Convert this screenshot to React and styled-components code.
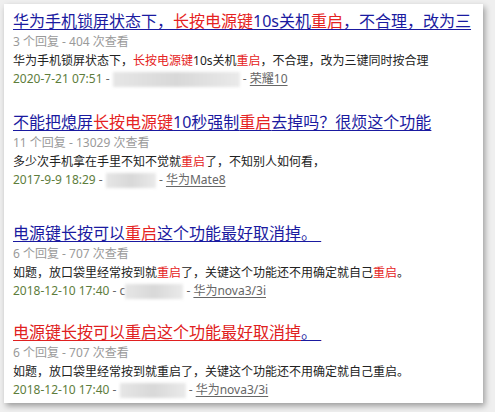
import React from "react";
import styled, { createGlobalStyle } from "styled-components";

const Global = createGlobalStyle`
  html, body { margin: 0; padding: 0; background: #efefef; }
  body { font-family: "Noto Sans", "Noto Sans CJK SC", sans-serif; }
`;

const Page = styled.div`
  width: 495px;
  height: 412px;
  padding: 4px 12px 9px 4px;
  box-sizing: border-box;
  background: #efefef;
`;

const Card = styled.div`
  background: #fff;
  height: 100%;
  box-sizing: border-box;
  padding: 6px 9px 6px 9px;
  box-shadow: 2px 3px 6px rgba(0, 0, 0, 0.35);
  overflow: hidden;
`;

const Item = styled.div`
  margin-top: ${(p) => p.$gap || 0}px;
`;

const Title = styled.a`
  display: block;
  font-size: 16px;
  line-height: 22px;
  color: ${(p) => (p.$visited ? "#e02020" : "#1a1aa0")};
  text-decoration: underline;
  text-decoration-thickness: 1px;
  text-underline-offset: 2px;
  white-space: nowrap;
`;

const Hl = styled.span`
  color: #e52222;
`;

const Tail = styled.span`
  color: #1a1aa0;
  text-decoration: underline;
  text-decoration-color: #1a1aa0;
  text-decoration-thickness: 1px;
  text-underline-offset: 2px;
`;

const Meta = styled.div`
  font-size: 12px;
  line-height: 20px;
  color: #9a9a9a;
`;

const Snippet = styled.div`
  font-size: 12px;
  line-height: 18px;
  color: #222;
  white-space: nowrap;
`;

const DateLine = styled.div`
  display: flex;
  align-items: center;
  font-size: 12px;
  line-height: 18px;
  color: #5e7d3c;
  white-space: pre;
`;

const Blur = styled.span`
  display: inline-block;
  width: ${(p) => p.$w}px;
  height: 15px;
  background: linear-gradient(90deg, #e6e6e6, #d8d8d8 50%, #eaeaea);
  filter: blur(1.5px);
`;

const User = styled.a`
  color: #666;
  text-decoration: underline;
  text-underline-offset: 2px;
`;

const Sep = styled.span`
  color: #666;
`;

const items = [
  {
    gap: 0,
    title: [
      ["华为手机锁屏状态下，", 0],
      ["长按电源键", 1],
      ["10s关机", 0],
      ["重启", 1],
      ["，不合理，改为三", 0],
    ],
    meta: "3 个回复 - 404 次查看",
    snippet: [
      ["华为手机锁屏状态下，", 0],
      ["长按电源键", 1],
      ["10s关机", 0],
      ["重启", 1],
      ["，不合理，改为三键同时按合理", 0],
    ],
    date: "2020-7-21 07:51",
    blur: 127,
    user: "荣耀10",
  },
  {
    gap: 23,
    title: [
      ["不能把熄屏", 0],
      ["长按电源键", 1],
      ["10秒强制", 0],
      ["重启", 1],
      ["去掉吗？很烦这个功能", 0],
    ],
    meta: "11 个回复 - 13029 次查看",
    snippet: [
      ["多少次手机拿在手里不知不觉就", 0],
      ["重启", 1],
      ["了，不知别人如何看，", 0],
    ],
    date: "2017-9-9 18:29",
    blur: 50,
    user: "华为Mate8",
  },
  {
    gap: 33,
    title: [
      ["电源键长按可以", 0],
      ["重启", 1],
      ["这个功能最好取消掉。\u00a0", 0],
    ],
    meta: "6 个回复 - 707 次查看",
    snippet: [
      ["如题，放口袋里经常按到就", 0],
      ["重启", 1],
      ["了，关键这个功能还不用确定就自己", 0],
      ["重启", 1],
      ["。", 0],
    ],
    date: "2018-12-10 17:40",
    blur: 58,
    prefix: "c",
    user: "华为nova3/3i",
  },
  {
    gap: 21,
    visited: true,
    title: [["电源键长按可以重启这个功能最好取消掉", 0]],
    tail: "。\u00a0",
    meta: "6 个回复 - 707 次查看",
    snippet: [["如题，放口袋里经常按到就重启了，关键这个功能还不用确定就自己重启。", 0]],
    date: "2018-12-10 17:40",
    blur: 66,
    user: "华为nova3/3i",
  },
];

const Parts = ({ parts }) =>
  parts.map(([t, h], i) => (h ? <Hl key={i}>{t}</Hl> : <span key={i}>{t}</span>));

export default function App() {
  return (
    <>
      <Global />
      <Page>
        <Card>
          {items.map((it, i) => (
            <Item key={i} $gap={it.gap}>
              <Title href="#" $visited={it.visited}>
                <Parts parts={it.title} />
                {it.tail && <Tail>{it.tail}</Tail>}
              </Title>
              <Meta>{it.meta}</Meta>
              <Snippet>
                <Parts parts={it.snippet} />
              </Snippet>
              <DateLine>
                {it.date}
                <Sep> - {it.prefix || ""}</Sep>
                <Blur $w={it.blur} />
                <Sep> - </Sep>
                <User href="#">{it.user}</User>
              </DateLine>
            </Item>
          ))}
        </Card>
      </Page>
    </>
  );
}
